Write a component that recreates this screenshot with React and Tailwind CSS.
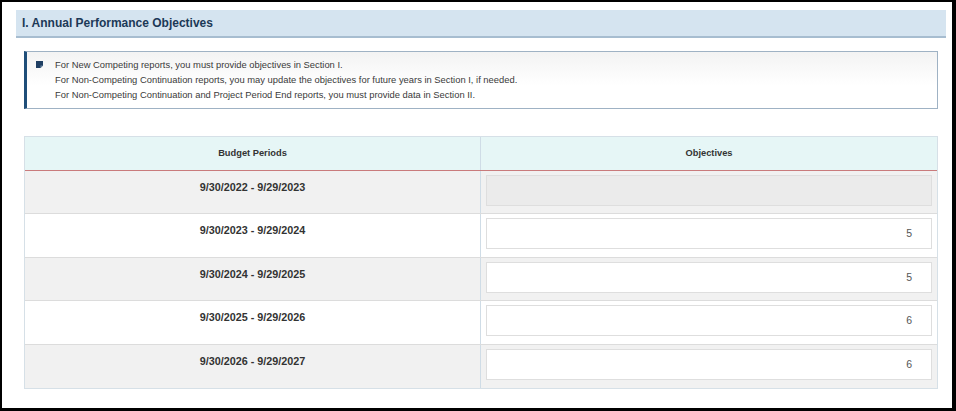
import React from "react";

const periods = [
  { range: "9/30/2022 - 9/29/2023", value: "", disabled: true },
  { range: "9/30/2023 - 9/29/2024", value: "5" },
  { range: "9/30/2024 - 9/29/2025", value: "5" },
  { range: "9/30/2025 - 9/29/2026", value: "6" },
  { range: "9/30/2026 - 9/29/2027", value: "6" },
];

function NoteIcon() {
  return (
    <svg width="7" height="7" viewBox="0 0 7 7" className="shrink-0 mt-[4px]">
      <path d="M0 0 H7 V4.5 L4.5 7 H0 Z" fill="#1f3f63" />
      <path d="M4.5 7 V4.5 H7" fill="#6f8aa6" />
    </svg>
  );
}

function App() {
  return (
    <div
      className="w-[956px] h-[411px] bg-white border-l-2 border-t-2 border-r-4 border-b-[3px] border-black overflow-hidden"
      style={{ fontFamily: '"Liberation Sans", Arial, sans-serif' }}
    >
      <div className="pt-[8px] pl-[14px] pr-[6px]">
        <div className="h-[28px] bg-[#d5e4f0] border-b-2 border-[#a7bdd0] flex items-center pl-[6px]">
          <span className="text-[12px] font-bold text-[#1c3957]">I. Annual Performance Objectives</span>
        </div>

        <div className="px-2">
          <div className="mt-[13px] h-[58px] border border-[#9fb2c4] border-l-[3px] border-l-[#1f4e79] bg-gradient-to-b from-[#f3f3f3] to-white to-60% flex pl-[9px] pt-[5px]">
            <NoteIcon />
            <div className="ml-[12px] text-[9.4px] leading-[15px] text-[#3a3a3a]">
              <div>For New Competing reports, you must provide objectives in Section I.</div>
              <div>For Non-Competing Continuation reports, you may update the objectives for future years in Section I, if needed.</div>
              <div>For Non-Competing Continuation and Project Period End reports, you must provide data in Section II.</div>
            </div>
          </div>

          <div className="mt-[27px] border border-[#d6e0e7]">
            <div className="flex h-[34px] bg-[#e6f6f6] border-b border-[#c97b7c]">
              <div className="w-[456px] border-r border-[#cfdce6] flex items-center justify-center text-[9.3px] font-bold text-[#333]">
                Budget Periods
              </div>
              <div className="flex-1 flex items-center justify-center text-[9.3px] font-bold text-[#333]">
                Objectives
              </div>
            </div>
            {periods.map((p, i) => (
              <div
                key={p.range}
                className={`flex border-b last:border-b-0 border-[#dcdcdc] ${i % 2 === 0 ? "bg-[#f1f1f1] h-[43px]" : "bg-white h-[44px]"}`}
              >
                <div className="w-[456px] border-r border-[#cfdce6] flex justify-center pt-[8px] text-[10.8px] font-bold text-[#333]">
                  {p.range}
                </div>
                <div className="flex-1 pt-[4px] px-[5px]">
                  <div
                    className={`h-[31px] border border-[#dedede] flex items-center justify-end pr-[19px] text-[10.5px] text-[#555] ${p.disabled ? "bg-[#ebebeb]" : "bg-white"}`}
                  >
                    {p.value}
                  </div>
                </div>
              </div>
            ))}
          </div>
        </div>
      </div>
    </div>
  );
}

export default App;
